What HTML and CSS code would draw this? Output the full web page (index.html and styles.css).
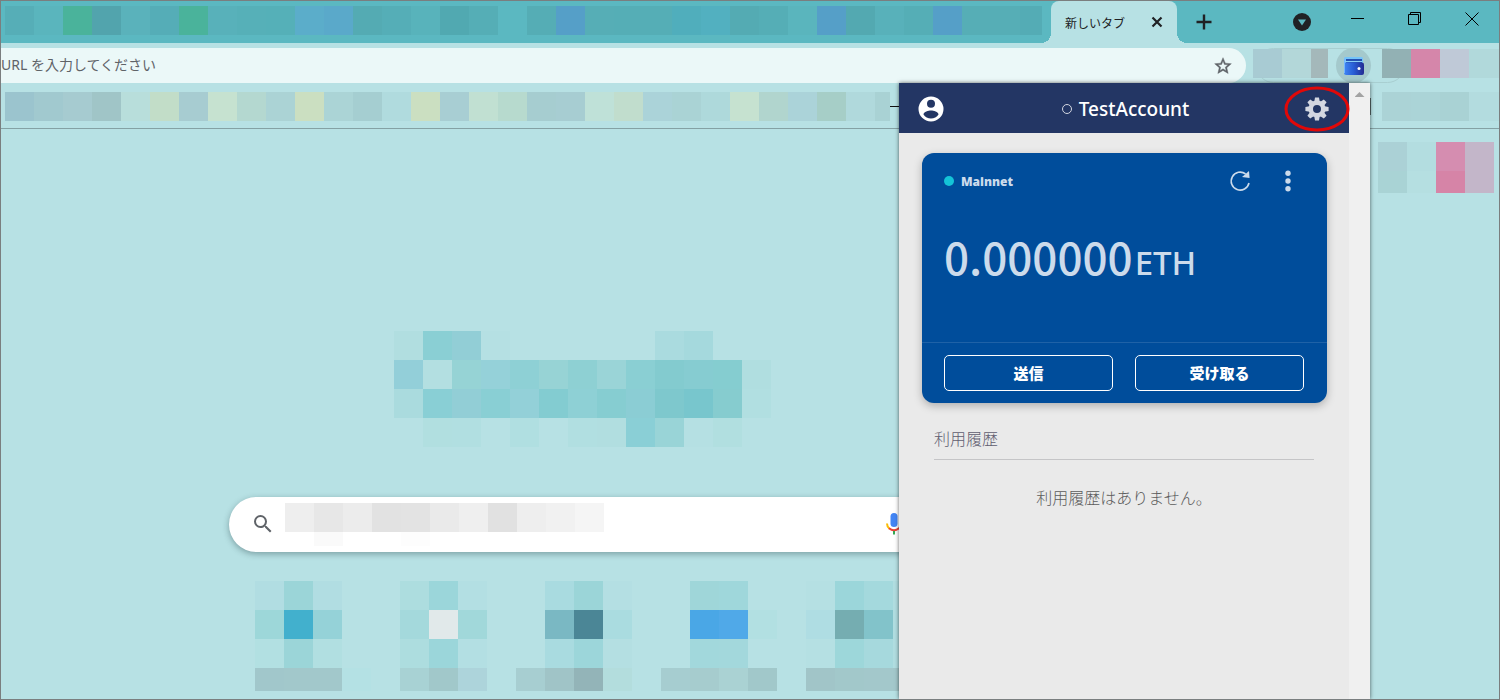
FILE: index.html
```html
<!DOCTYPE html>
<html lang="ja">
<head>
<meta charset="utf-8">
<title>新しいタブ</title>
<link rel="stylesheet" href="styles.css">
</head>
<body>
<div class="window">
  <header class="tabstrip">
    <svg class="mosaic tabs-mosaic" width="1037" height="29" aria-hidden="true" data-tiles="56aeb7 5ab5bd 4ab39b 52a4ad 5ab2bb 55adb7 4ab39b 58b1ba 56b0b8 55b0b8 5badca 5aa9ca 54abb3 55aeb7 58b3bb 51a9b1 55aeb6 - 55adb5 559fc8 56aeb6 55aeb6 55aeb6 50aebc 52b0c0 54abb3 55aeb6 5ab5bd 559fc8 53a9b1 58b1ba 55aeb6 559fc8 56aeb6 56aeb6 54acb5"></svg>
    <div class="tab">
      <span class="tab-title">新しいタブ</span>
      <button class="icon-btn" aria-label="タブを閉じる">
        <svg width="12" height="12" viewBox="0 0 12 12"><path d="M1.500 1.500l9 9M10.500 1.500l-9 9" stroke="#202124" stroke-width="2.200"/></svg>
      </button>
    </div>
    <button class="icon-btn new-tab" aria-label="新しいタブを開く">
      <svg width="16" height="16" viewBox="0 0 16 16"><path d="M8 .5v15M.5 8h15" stroke="#202124" stroke-width="2.400"/></svg>
    </button>
    <div class="window-controls">
      <button class="icon-btn search-tabs" aria-label="タブを検索">
        <svg width="18" height="18" viewBox="0 0 18 18"><circle cx="9" cy="9" r="9" fill="#202124"/><path d="M5 6.500h8l-4 6z" fill="#5bb8c1"/></svg>
      </button>
      <button class="icon-btn" aria-label="最小化">
        <svg width="14" height="14" viewBox="0 0 14 14" shape-rendering="crispEdges"><path d="M0 6.500h13" stroke="#000"/></svg>
      </button>
      <button class="icon-btn" aria-label="元に戻す">
        <svg width="14" height="14" viewBox="0 0 14 14" fill="none" stroke="#000"><path d="M.5 2.500h10v10h-10zM2.500 2.500v-2h10v10h-2"/></svg>
      </button>
      <button class="icon-btn" aria-label="閉じる">
        <svg width="14" height="14" viewBox="0 0 14 14"><path d="M.5.5l13 13M13.500.5l-13 13" stroke="#000"/></svg>
      </button>
    </div>
  </header>

  <div class="toolbar">
    <div class="omnibox">
      <input type="text" aria-label="アドレスバー" placeholder="URL を入力してください">
      <button class="icon-btn" aria-label="ブックマークに追加">
        <svg width="20" height="20" viewBox="0 0 24 24"><path fill="#5f6368" stroke="#5f6368" stroke-width=".5" d="M22 9.240l-7.190-.62L12 2 9.190 8.630 2 9.240l5.460 4.730L5.820 21 12 17.270 18.180 21l-1.630-7.030L22 9.240zM12 15.400l-3.760 2.270 1-4.280-3.320-2.880 4.380-.38L12 6.100l1.710 4.040 4.380.38-3.320 2.880 1 4.280L12 15.400z"/></svg>
      </button>
    </div>
    <div class="extensions">
      <svg class="mosaic" width="75" height="29" aria-hidden="true" data-tiles="a8cbd3 b3d7d9 a4b8ba"></svg>
      <button class="wallet-btn" aria-label="ウォレット">
        <svg width="22" height="20" viewBox="0 0 22 20">
          <defs><linearGradient id="wallet"><stop offset="0" stop-color="#4086f5"/><stop offset=".5" stop-color="#285bd3"/><stop offset="1" stop-color="#242b91"/></linearGradient></defs>
          <rect x="1" y="1" width="19" height="8" rx="1.500" fill="#75c4fa"/>
          <path d="M3 3h16v4H3z" fill="#2551b1"/><path d="M2 5.500h17" stroke="#8bd0f7"/>
          <rect x="1" y="6.500" width="20" height="12.500" rx="2" fill="url(#wallet)"/>
          <path d="M1.500 3v14" stroke="#75b7ff"/><circle cx="16" cy="12.500" r="1.500" fill="#fff"/>
        </svg>
      </button>
      <svg class="mosaic" width="117" height="29" aria-hidden="true" data-tiles="92b1b4 d586aa bfc9d7 b1d9db b1d9db"></svg>
    </div>
  </div>

  <div class="bookmarks">
    <svg class="mosaic" width="885" height="29" aria-hidden="true" data-tiles="9bc4ce a1c9cf a6cbd0 a0c5c7 b8dedb c2ddc8 a7ccd1 c6e2d0 b4d8d0 abd3d5 cbdfc1 abd4d6 a5ced1 b0dbde cbdfc1 a8ced3 c1e0d2 b7dace a6cdd0 a7cdd2 bfe1d8 c1ddcd abd3d9 aad3d5 aed9db c6e2d0 b1d5ce abd3d9 a6cec7 b0d9dc a9d2d4"></svg>
    <span class="bookmark-dash"></span>
    <span class="bookmark-divider"></span>
    <svg class="mosaic" width="117" height="29" aria-hidden="true" data-tiles="abd3d6 abd4d7 a9d2d4 b3dcdf b3dcdf"></svg>
  </div>

  <main class="page">
    <div class="start">
      <svg class="mosaic logo" width="377" height="116" aria-hidden="true" data-tiles="b1dee0 8acfd4 92ced6 b5e0e3 - - - - - aadbdf a5d9dd - - / 93cfd9 b3dfe1 96d3d5 95d1d9 8ed0d5 97d3d5 8ed0d3 9ad4d7 8acfd3 83cbcf 86ccd1 85cdd0 b0dee0 / aadbde 89cfd5 92ced6 89cfd4 93d0d8 83ccd1 8ed0d5 86cdd1 8bcdd4 7ec8cd 78c6cd 86cccf b1dfe1 / - b1dfe0 b1dfe1 - b0dfe1 - b1dfe1 b1dee0 8acfd6 99d4d7 b5e0e3 b1dfe0 -"></svg>
      <div class="search">
        <svg width="24" height="24" viewBox="0 0 24 24" aria-hidden="true"><path fill="#5f6368" d="M15.500 14h-.79l-.28-.27A6.470 6.470 0 0 0 16 9.500 6.500 6.500 0 1 0 9.500 16c1.610 0 3.090-.59 4.230-1.570l.27.28v.79l5 4.990L20.490 19l-4.990-5zm-6 0C7.010 14 5 11.990 5 9.500S7.010 5 9.500 5 14 7.010 14 9.500 11.990 14 9.500 14z"/></svg>
        <svg class="mosaic query" width="320" height="43" aria-hidden="true" data-tiles="eeeeee e7e7e7 ececec e2e2e2 e3e3e3 eaeaea efefef e1e1e1 eeeeee f1f1f1 f5f5f5 / - fafafa - - fdfdfd"></svg>
        <button class="icon-btn mic" aria-label="音声検索">
          <svg width="24" height="24" viewBox="0 0 24 24" fill="none" stroke-width="2"><rect x="8.500" y="1" width="7" height="14" rx="3.500" fill="#4285f4"/><path d="M5 11.500c0 2.300.9 4 2.500 5.200" stroke="#fbbc04"/><path d="M7 16.300c3 2.500 7 2.500 10 0 1.300-1.200 2-2.800 2-4.800" stroke="#ea4335"/><path d="M12 19v3.500" stroke="#34a853"/></svg>
        </button>
      </div>
      <nav class="shortcuts" aria-label="ショートカット">
        <a href="#" aria-label="ショートカット 1"><svg class="mosaic" width="145" height="110" data-tiles="- b1dde2 9bd5d8 b1dde2 - / - 9dd7d9 42b0cd 95d2d8 - / - b2e0e2 9bd5d8 b1dfe1 - / - a1c7cb a2c8cb a2c8cb b4e1e4"></svg></a>
        <a href="#" aria-label="ショートカット 2"><svg class="mosaic" width="145" height="110" data-tiles="- addddf 9bd6da b3dfe3 - / - a4d9dc e1e9ea a1d8da - / - addddf 9bd6da b3dfe3 - / - a8d2d4 a1c8ca add4db -"></svg></a>
        <a href="#" aria-label="ショートカット 3"><svg class="mosaic" width="145" height="110" data-tiles="- a9dbe0 9bd5d8 b4dfe3 - / - 7ab8c3 4b8696 aadce0 - / - a9dbe0 9cd6da b4dfe2 - / a7ced1 a0c4c7 93b4b8 b3dddd -"></svg></a>
        <a href="#" aria-label="ショートカット 4"><svg class="mosaic" width="145" height="110" data-tiles="- 9fd6d9 9fd7db - - / - 4aa7e6 50a9e8 b2e0e2 - / - a2d8dc a3d8dc - - / a6cdd0 a6ccce aad2d3 a1c8ca -"></svg></a>
        <a href="#" aria-label="ショートカット 5"><svg class="mosaic" width="145" height="110" data-tiles="b5e0e3 9bd6da a4d9dd b1dee1 - / afdde3 75adb1 82c3ca b1dee1 - / b5e0e3 9dd7da a6d9dd b1dee1 - / a1c5c8 a2c8ca a3c8cb a3c8cb -"></svg></a>
      </nav>
    </div>
    <svg class="mosaic side" width="116" height="51" aria-hidden="true" data-tiles="abd1d6 b3dde0 d58db0 c3b6c9 / a9d3d5 b5dfe1 d684a7 c3b6c9"></svg>
  </main>

  <section class="popup" aria-label="ウォレット">
    <div class="wallet">
      <header class="wallet-header">
        <button class="icon-btn" aria-label="アカウント">
          <svg width="30" height="30" viewBox="0 0 24 24"><path fill="#fff" d="M12 2a10 10 0 1 0 0 20 10 10 0 0 0 0-20zm0 2.500a3.200 3.200 0 1 1 0 6.400 3.200 3.200 0 0 1 0-6.400zM12 19.500c-2.500 0-4.700-1.300-6-3.200.03-2 4-3.100 6-3.100s5.970 1.100 6 3.100c-1.300 1.900-3.500 3.200-6 3.200z"/></svg>
        </button>
        <h1 class="account"><span class="account-ring"></span>TestAccount</h1>
        <button class="icon-btn settings" aria-label="設定">
          <svg width="24" height="24" viewBox="-12 -12 24 24" fill="#d3d7e1">
            <path fill-rule="evenodd" d="M0-8.500a8.500 8.500 0 1 0 0 17 8.500 8.500 0 0 0 0-17zm0 4.500a4 4 0 1 1 0 8 4 4 0 0 1 0-8z"/>
            <g id="teeth"><path id="tooth" d="M-2.700-7.500L-2-11.600h4l.7 4.100zM-2.700 7.500L-2 11.600h4l.7-4.100z"/><use href="#tooth" transform="rotate(90)"/></g>
            <use href="#teeth" transform="rotate(45)"/>
          </svg>
          <svg class="highlight" width="66" height="48" viewBox="0 0 66 48" aria-hidden="true"><ellipse cx="33" cy="24" rx="31" ry="21" fill="none" stroke="#e10808" stroke-width="3"/></svg>
        </button>
      </header>
      <section class="card">
        <div class="card-main">
          <div class="network">
            <span class="network-dot"></span><span class="network-name">Mainnet</span>
            <button class="icon-btn" aria-label="更新">
              <svg width="22" height="22" viewBox="0 0 22 22"><path d="M16.600 3.900A9 9 0 1 0 20 13" fill="none" stroke="#ccdbeb" stroke-width="1.600"/><path d="M20 1l.6 7-7.600-1z" fill="#ccdbeb"/></svg>
            </button>
            <button class="icon-btn" aria-label="メニュー">
              <svg width="8" height="22" viewBox="0 0 8 22" fill="#ccdbeb"><circle cx="4" cy="3.200" r="2.700"/><circle cx="4" cy="11" r="2.700"/><circle cx="4" cy="18.800" r="2.700"/></svg>
            </button>
          </div>
          <p class="balance">0.000000<span class="unit">ETH</span></p>
        </div>
        <div class="actions"><button>送信</button><button>受け取る</button></div>
      </section>
      <section class="history">
        <h2>利用履歴</h2>
        <p>利用履歴はありません。</p>
      </section>
    </div>
    <div class="scrollbar"><span class="scroll-up"></span></div>
  </section>
</div>
<script src="mosaic.js"></script>
</body>
</html>
```
FILE: styles.css
```css
* { box-sizing: border-box; }

body {
  margin: 0;
  font-family: "Noto Sans", "Noto Sans CJK JP", sans-serif;
  color: #202124;
}

button {
  font: inherit;
  cursor: pointer;
}

.window {
  position: relative;
  display: flex;
  flex-direction: column;
  height: 100vh;
  overflow: hidden;
  border: 1px solid #7a7e7f;
  background: #b7e1e4;
}

.mosaic {
  display: block;
  flex: none;
  shape-rendering: crispEdges;
}

.icon-btn {
  display: flex;
  flex: none;
  padding: 0;
  border: 0;
  background: none;
}

.tabstrip {
  display: flex;
  flex: none;
  align-items: center;
  height: 42px;
  padding-left: 4px;
  background: #5bb8c1;
}

.tabs-mosaic { margin-bottom: 4px; }

.tab {
  position: relative;
  display: flex;
  flex: none;
  align-items: center;
  justify-content: space-between;
  width: 126px;
  height: 42px;
  margin-left: 9px;
  padding: 0 14px;
  border-radius: 8px 8px 0 0;
  background: #b7e1e4;
}

.tab::before,
.tab::after {
  position: absolute;
  bottom: 0;
  width: 10px;
  height: 10px;
  content: "";
}

.tab::before {
  right: 100%;
  background: radial-gradient(circle at 0 0, transparent 10px, #b7e1e4 10px);
}

.tab::after {
  left: 100%;
  background: radial-gradient(circle at 100% 0, transparent 10px, #b7e1e4 10px);
}

.tab-title {
  font-family: "Noto Sans CJK JP", sans-serif;
  font-size: 12px;
  white-space: nowrap;
}

.new-tab { margin-left: 19px; }

.window-controls {
  display: flex;
  gap: 43px;
  align-items: center;
  margin: 0 20px 6px auto;
}

.search-tabs {
  margin: 6px -3px 0 0;
}

.toolbar {
  display: flex;
  flex: none;
  height: 40px;
  padding-top: 5px;
}

.omnibox {
  display: flex;
  flex: 1;
  align-items: center;
  padding-right: 13px;
  border-radius: 0 18px 18px 0;
  background: #ebf8f8;
}

.omnibox input {
  flex: 1;
  min-width: 0;
  height: 35px;
  padding: 0 0 2px;
  border: 0;
  outline: 0;
  background: none;
  font-family: "Noto Sans", "Noto Sans CJK JP", sans-serif;
  font-size: 14px;
}

.omnibox input::placeholder { color: #5f6368; }

.extensions {
  position: relative;
  display: flex;
  flex: none;
  align-items: center;
  padding-left: 7px;
}

.extensions::before {
  position: absolute;
  inset: 0 94px 0 10px;
  border: 1px solid #a8cfd1;
  border-radius: 18px;
  content: "";
}

.extensions .mosaic {
  position: relative;
  margin-bottom: 4px;
}

.wallet-btn {
  position: relative;
  display: flex;
  align-items: center;
  justify-content: center;
  width: 35px;
  height: 35px;
  margin: 0 11px 0 8px;
  padding: 0;
  border: 0;
  border-radius: 50%;
  background: #a4c9cc;
}

.bookmarks {
  display: flex;
  flex: none;
  align-items: center;
  height: 46px;
  padding: 1px 0 0 4px;
  border-bottom: 1px solid #84a1a4;
}

.bookmark-dash {
  width: 10px;
  height: 1px;
  background: #111;
}

.bookmark-divider {
  width: 1px;
  height: 17px;
  margin: 0 11px 0 auto;
  background: #566;
}

.page {
  display: flex;
  flex: 1;
  align-items: flex-start;
  justify-content: space-between;
  min-height: 0;
}

.start {
  flex: none;
  width: 728px;
  margin-left: 225px;
  padding-top: 202px;
}

.logo { margin-left: 168px; }

.search {
  display: flex;
  align-items: center;
  width: 702px;
  height: 55px;
  margin: 50px 0 0 3px;
  padding: 0 25px 1px 22px;
  border-radius: 28px;
  background: #fff;
  box-shadow: 0 2px 6px rgba(32, 60, 65, 0.4);
}

.query {
  margin-left: 10px;
}

.mic { margin-left: auto; }

.shortcuts {
  display: flex;
  margin-top: 29px;
}

.side { margin: 13px 5px 0 0; }

.popup {
  position: absolute;
  top: 82px;
  right: 129px;
  bottom: 0;
  display: flex;
  width: 471px;
  background: #eaeaea;
  box-shadow: 0 0 4px rgba(0, 0, 0, 0.6);
}

.wallet {
  flex: 1;
}

.wallet-header {
  display: flex;
  align-items: center;
  justify-content: space-between;
  height: 50px;
  padding: 2px 20px 0 17px;
  background: #233664;
}

.account {
  display: flex;
  gap: 7px;
  align-items: center;
  margin: 0;
  color: #fff;
  font-size: 19px;
  font-weight: 500;
}

.account-ring {
  width: 10px;
  height: 10px;
  border: 1px solid #d3d7e1;
  border-radius: 50%;
}

.settings { position: relative; }

.highlight {
  position: absolute;
  top: -12px;
  left: -21px;
}

.card {
  margin: 20px 22px 0 23px;
  border-radius: 12px;
  background: #004d9b;
  box-shadow: 0 3px 8px rgba(0, 0, 0, 0.25);
}

.card-main {
  height: 190px;
  padding: 17px 35px 0 22px;
  border-bottom: 1px solid #1f62a7;
}

.network {
  display: flex;
  align-items: center;
  color: #ccdbeb;
}

.network-dot {
  width: 10px;
  height: 10px;
  border-radius: 50%;
  background: #14c4d7;
}

.network-name {
  margin: 0 auto 0 7px;
  font-family: "Open Sans", sans-serif;
  font-size: 12px;
  font-weight: 800;
}

.network .icon-btn + .icon-btn { margin-left: 33px; }

.balance {
  margin: 34px 0 0;
  color: #ccdbeb;
  font-family: "Noto Sans CJK JP", sans-serif;
  font-size: 44px;
  font-weight: 500;
  line-height: 60px;
}

.unit {
  margin-left: 2px;
  font-family: "Noto Sans", sans-serif;
  font-size: 33px;
}

.actions {
  display: grid;
  grid-template-columns: 1fr 1fr;
  gap: 22px;
  padding: 12px 23px 12px 22px;
}

.actions button {
  height: 36px;
  padding: 0 0 2px;
  border: 1px solid #fff;
  border-radius: 5px;
  background: none;
  color: #fff;
  font-family: "Noto Sans CJK JP", sans-serif;
  font-size: 15px;
  font-weight: 900;
}

.history {
  margin: 23px 35px 0;
  font-family: "Noto Sans CJK JP", sans-serif;
  font-size: 16px;
  line-height: 24px;
}

.history h2 {
  margin: 0;
  padding-bottom: 9px;
  border-bottom: 1px solid #c5c5c7;
  color: #605d70;
  font-size: 16px;
  font-weight: 300;
}

.history p {
  margin: 25px 0 0;
  color: #5c5c5c;
  font-weight: 300;
  text-align: center;
}

.scrollbar {
  display: flex;
  justify-content: center;
  width: 21px;
  padding-top: 9px;
  background: #f0f0f0;
}

.scroll-up {
  width: 10px;
  height: 5px;
  background: #a3a3a3;
  clip-path: polygon(50% 0, 100% 100%, 0 100%);
}
```
FILE: mosaic.js
```js
// Draws each .mosaic from its list of hex colours: "/" starts a row, "-" leaves a gap.
const TILE = 29;
for (const svg of document.querySelectorAll(".mosaic")) {
  svg.dataset.tiles.split("/").forEach((row, y) => {
    row.trim().split(/\s+/).forEach((colour, x) => {
      if (colour === "-") return;
      const rect = document.createElementNS("http://www.w3.org/2000/svg", "rect");
      rect.setAttribute("x", x * TILE);
      rect.setAttribute("y", y * TILE);
      rect.setAttribute("width", TILE);
      rect.setAttribute("height", TILE);
      rect.setAttribute("fill", "#" + colour);
      svg.append(rect);
    });
  });
}
```
